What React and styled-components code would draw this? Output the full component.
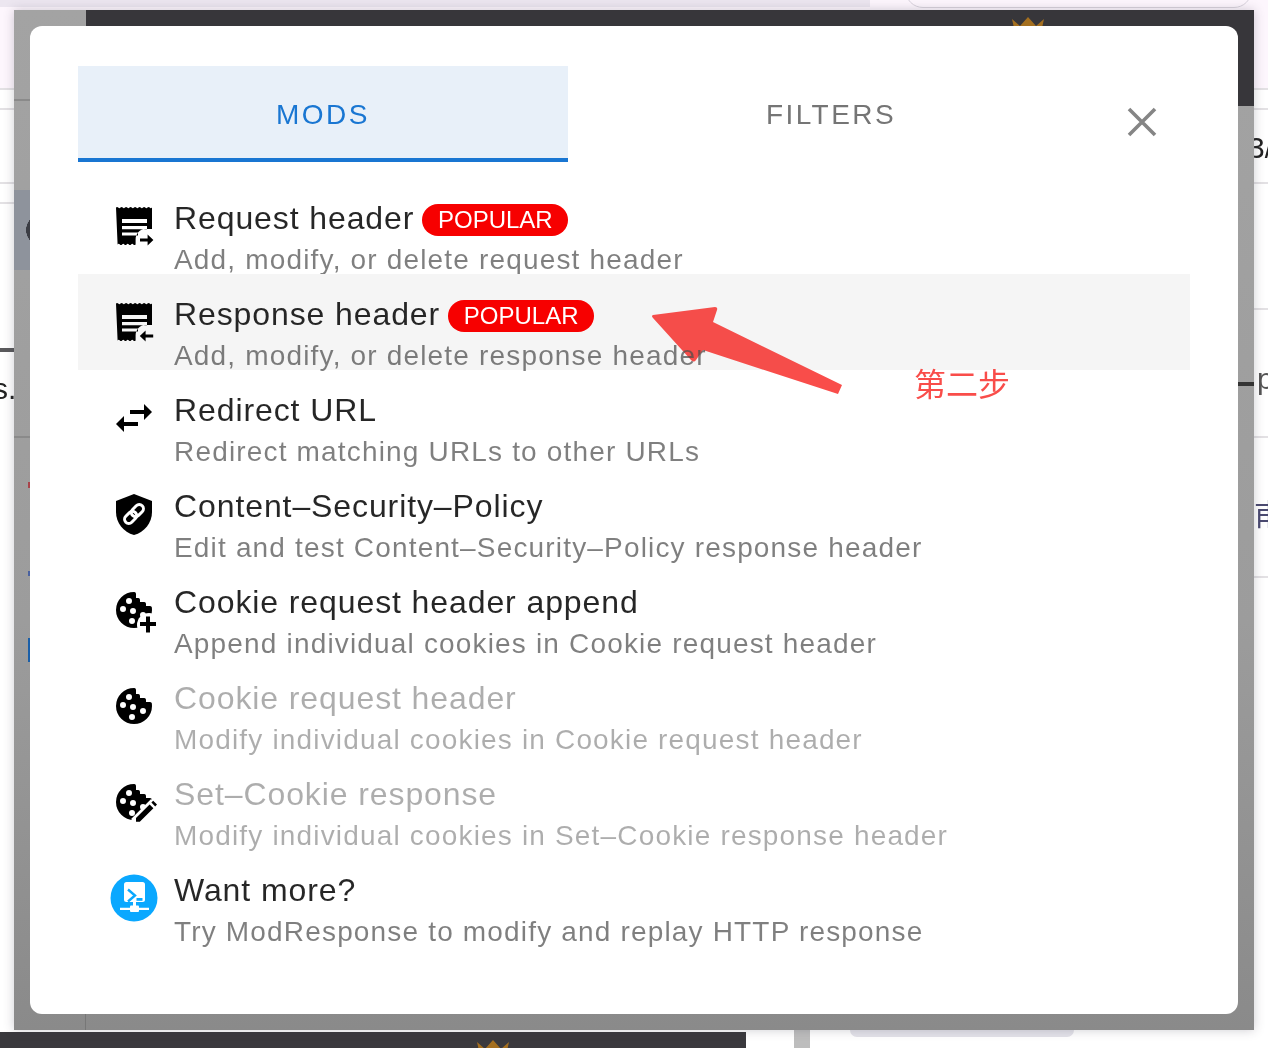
import styled, { createGlobalStyle } from "styled-components";

const GlobalStyle = createGlobalStyle`
  html, body {
    margin: 0;
    padding: 0;
    background: #fff;
    font-family: "Liberation Sans", Arial, sans-serif;
  }
`;

// one flat bar as a background layer, for the page that shows behind the overlay
const bar = (x, y, w, h, c) =>
  `linear-gradient(${c}, ${c}) ${x}px ${y}px / ${w}px ${h}px no-repeat`;

const Stage = styled.div`
  position: relative;
  display: flex;
  flex-direction: column;
  width: 1268px;
  height: 1048px;
  overflow: hidden;
  background: ${bar(0, 88, 1268, 2, "#e3e1e4")}, ${bar(0, 108, 1268, 2, "#e3e1e4")},
    ${bar(0, 182, 1268, 2, "#e3e1e4")}, ${bar(0, 202, 14, 2, "#e3e1e4")},
    ${bar(0, 348, 14, 4, "#5a5a5c")}, ${bar(1254, 308, 14, 2, "#e3e1e4")},
    ${bar(1254, 436, 14, 2, "#e3e1e4")}, ${bar(1254, 576, 14, 2, "#e3e1e4")},
    linear-gradient(#fdf6fd 0, #fdf6fd 88px, #fff 88px);
`;

const TopBand = styled.div`
  position: relative;
  flex: none;
  box-sizing: border-box;
  height: 10px;
  overflow: hidden;
  background: linear-gradient(#ece6f0 7px, transparent 7px) 0 0 / 870px 100% no-repeat;
  border-bottom: 2px solid #fdf6fd;
`;

const SearchPill = styled.div`
  position: absolute;
  top: -30px;
  left: 905px;
  width: 345px;
  height: 36px;
  border-radius: 18px;
  background: #fdf6fd;
  border: 1px solid #d8d2dc;
`;

const Scrap = styled.span`
  position: absolute;
  left: ${(p) => p.$x}px;
  top: ${(p) => p.$y}px;
  font-size: 30px;
  line-height: 34px;
  color: ${(p) => p.$c || "#222"};
  font-family: "Liberation Sans", "Noto Sans CJK SC", sans-serif;
`;

const TopCrown = styled.svg`
  position: absolute;
  left: 998px;
  top: 7px;
`;

const Overlay = styled.div`
  position: relative;
  flex: none;
  box-sizing: border-box;
  width: 1240px;
  height: 1020px;
  margin: 0 14px;
  padding: 16px;
  overflow: hidden;
  background: ${bar(72, 0, 1168, 96, "#37363a")}, ${bar(0, 89, 72, 2, "#8a8a8a")},
    radial-gradient(circle 16px at 28px 220px, #3b3d44 98%, transparent),
    ${bar(0, 180, 16, 80, "#8e939c")}, ${bar(0, 426, 16, 2, "#8a8a8a")},
    ${bar(1224, 372, 16, 4, "#333")}, ${bar(14, 472, 2, 6, "#a8434a")},
    ${bar(14, 561, 2, 5, "#4a62a0")}, ${bar(14, 628, 2, 24, "#1a5fa8")},
    ${bar(71, 1004, 1, 16, "#777")}, linear-gradient(#a3a3a3, #9c9c9c 60%, #8a8a8a);
  box-shadow: 0 0 10px rgba(60, 50, 70, 0.25);
`;

const Dialog = styled.div`
  position: relative;
  box-sizing: border-box;
  height: 988px;
  padding: 40px 48px;
  background: #fff;
  border-radius: 12px;
`;

const TabRow = styled.div`
  display: flex;
  align-items: stretch;
  height: 96px;
  margin-bottom: 16px;
`;

const Tab = styled.div`
  display: flex;
  align-items: center;
  justify-content: center;
  box-sizing: border-box;
  width: ${(p) => (p.$active ? 490 : 526)}px;
  padding-top: 6px;
  font-size: 28px;
  letter-spacing: 2.45px;
  color: ${(p) => (p.$active ? "#1976d2" : "#757575")};
  background: ${(p) => (p.$active ? "#e8f0f9" : "transparent")};
  border-bottom: 4px solid ${(p) => (p.$active ? "#1976d2" : "transparent")};
`;

const CloseButton = styled.button`
  display: flex;
  align-items: center;
  justify-content: center;
  width: 44px;
  height: 44px;
  margin: 34px 0 0 26px;
  padding: 0;
  border: none;
  background: transparent;
  color: #858585;
`;

const List = styled.div`
  display: flex;
  flex-direction: column;
`;

const Row = styled.div`
  display: flex;
  align-items: center;
  height: 96px;
  padding-left: 32px;
  background: ${(p) => (p.$hover ? "#f5f5f5" : "transparent")};
`;

const IconBox = styled.div`
  flex: none;
  width: 48px;
  height: 48px;
  margin-right: 16px;
`;

const Texts = styled.div`
  display: flex;
  flex-direction: column;
  padding-top: 24px;
`;

const Title = styled.div`
  display: flex;
  align-items: center;
  height: 42px;
  font-size: 32px;
  letter-spacing: 0.9px;
  color: ${(p) => (p.$off ? "rgba(0, 0, 0, 0.32)" : "rgba(0, 0, 0, 0.85)")};
`;

const Badge = styled.span`
  display: flex;
  align-items: center;
  justify-content: center;
  box-sizing: border-box;
  width: 146px;
  height: 32px;
  margin: 2px 0 0 8px;
  border-radius: 16px;
  background: #f70000;
  color: #fff;
  font-size: 24px;
  letter-spacing: 0;
`;

const Sub = styled.div`
  height: 39px;
  line-height: 39px;
  font-size: 28px;
  letter-spacing: 1.17px;
  white-space: nowrap;
  color: ${(p) => (p.$off ? "rgba(0, 0, 0, 0.32)" : "rgba(0, 0, 0, 0.5)")};
`;

const BottomStrip = styled.div`
  flex: 1;
  display: flex;
  align-items: flex-start;
`;

const BottomBar = styled.div`
  display: flex;
  align-items: flex-start;
  box-sizing: border-box;
  width: 746px;
  height: 16px;
  margin-top: 2px;
  padding: 8px 0 0 477px;
  overflow: hidden;
  background: #3a393d;
`;

const GreyStub = styled.div`
  width: 16px;
  height: 18px;
  margin-left: 48px;
  background: #bdbdbd;
`;

const Pill = styled.div`
  width: 224px;
  height: 7px;
  margin-left: 40px;
  border-radius: 0 0 8px 8px;
  background: #e4e3ea;
`;

const Arrow = styled.svg`
  position: absolute;
  left: 640px;
  top: 290px;
  mix-blend-mode: darken;
`;

const StepLabel = styled.span`
  position: absolute;
  left: 914px;
  top: 360px;
  font-family: "Noto Sans CJK SC", sans-serif;
  font-size: 32px;
  line-height: 44px;
  font-weight: 400;
  color: #f94d4a;
`;

const Glyph = ({ children }) => (
  <svg width="48" height="48" viewBox="0 0 24 24" fill="#000">
    {children}
  </svg>
);

const bump = "q.56-.7 1.12 0t1.13 0";
const bumpBack = "q-.56.7-1.12 0t-1.13 0";

const ReceiptBody = () => (
  <path
    fillRule="evenodd"
    d={`M3 2.8${bump}${bump}${bump}${bump}${bump}${bump}${bump}${bump}V13.5h-3.4c-2.6 0-4.8 2.4-4.8 5.2v2.5${bumpBack}${bumpBack}${bumpBack}${bumpBack}zM6 8.5v2h12.5v-2zM6 12v1.6h12.5V12zM6 15.2v1.6h8v-1.6z`}
  />
);

const ReceiptOut = () => (
  <Glyph>
    <ReceiptBody />
    <path d="M15 18.2h3.8v-1.9l2.9 2.7-2.9 2.7v-1.9H15z" />
  </Glyph>
);

const ReceiptIn = () => (
  <Glyph>
    <ReceiptBody />
    <path d="M21.6 18.2h-3.8v-1.9l-2.9 2.7 2.9 2.7v-1.9h3.8z" />
  </Glyph>
);

const Swap = () => (
  <Glyph>
    <path d="M21 9l-4-4v3h-7v2h7v3zM7 11l-4 4 4 4v-3h7v-2H7z" />
  </Glyph>
);

const ShieldLink = () => (
  <Glyph>
    <path d="M12 2L3 5.5V11c0 5.3 3.7 10.2 9 11.5 5.3-1.3 9-6.2 9-11.5V5.5z" />
    <g fill="none" stroke="#fff" strokeWidth="1.5" transform="rotate(-45 12 12)">
      <rect x="6.2" y="9.9" width="6.8" height="4.2" rx="2.1" />
      <rect x="11" y="9.9" width="6.8" height="4.2" rx="2.1" />
    </g>
  </Glyph>
);

const cookie =
  "M12,3A9,9 0 0,0 3,12A9,9 0 0,0 12,21A9,9 0 0,0 21,12C21,11.5 20.96,11 20.87,10.5C20.6,10 20,10 20,10H18V9C18,8 17,8 17,8H15V7C15,6 14,6 14,6H13V4C13,3 12,3 12,3M9.5,6A1.5,1.5 0 0,1 11,7.5A1.5,1.5 0 0,1 9.5,9A1.5,1.5 0 0,1 8,7.5A1.5,1.5 0 0,1 9.5,6M6.5,10A1.5,1.5 0 0,1 8,11.5A1.5,1.5 0 0,1 6.5,13A1.5,1.5 0 0,1 5,11.5A1.5,1.5 0 0,1 6.5,10M11.5,11A1.5,1.5 0 0,1 13,12.5A1.5,1.5 0 0,1 11.5,14A1.5,1.5 0 0,1 10,12.5A1.5,1.5 0 0,1 11.5,11M16.5,13A1.5,1.5 0 0,1 18,14.5A1.5,1.5 0 0,1 16.5,16A1.5,1.5 0 0,1 15,14.5A1.5,1.5 0 0,1 16.5,13M11,16A1.5,1.5 0 0,1 12.5,17.5A1.5,1.5 0 0,1 11,19A1.5,1.5 0 0,1 9.5,17.5A1.5,1.5 0 0,1 11,16Z";

const Cookie = () => (
  <Glyph>
    <path d={cookie} />
  </Glyph>
);

const CookiePlus = () => (
  <Glyph>
    <path d={cookie} />
    <circle cx="19.5" cy="19.5" r="6" fill="#fff" />
    <path d="M18 15.2h2V18h3v2h-3v3.2h-2V20h-3v-2h3z" />
  </Glyph>
);

const CookieEdit = () => (
  <Glyph>
    <path d={cookie} />
    <path d="M12.5 22.5L22.5 12.5" stroke="#fff" strokeWidth="5.5" />
    <path d="M13 20l6.8-6.8 1.9 1.9-6.8 6.8H13zM20.7 12.3l.9-.9 1.9 1.9-.9.9z" />
  </Glyph>
);

const ModResponseIcon = () => (
  <svg width="48" height="48" viewBox="0 0 48 48">
    <circle cx="24" cy="24" r="23.5" fill="#0aa8ff" />
    <rect x="14" y="8" width="21" height="20" rx="2.5" fill="#fff" />
    <path d="M18 15.5l7 6-7 6" fill="none" stroke="#0aa8ff" strokeWidth="2.4" />
    <path d="M26.5 24h6v2.8h-6z" fill="#0aa8ff" />
    <path d="M23 28h3v4h-3zM10 33.8h29v2.2H10z" fill="#fff" />
    <rect x="20" y="31.4" width="9" height="6.6" rx="1" fill="#fff" />
  </svg>
);

const CloseIcon = () => (
  <svg width="30" height="30" viewBox="0 0 30 30">
    <path d="M2 2l26 26M28 2L2 28" stroke="currentColor" strokeWidth="3.6" />
  </svg>
);

const mods = [
  { id: "req", icon: ReceiptOut, title: "Request header", sub: "Add, modify, or delete request header", popular: true },
  { id: "res", icon: ReceiptIn, title: "Response header", sub: "Add, modify, or delete response header", popular: true, hover: true },
  { id: "red", icon: Swap, title: "Redirect URL", sub: "Redirect matching URLs to other URLs" },
  { id: "csp", icon: ShieldLink, title: "Content–Security–Policy", sub: "Edit and test Content–Security–Policy response header" },
  { id: "cka", icon: CookiePlus, title: "Cookie request header append", sub: "Append individual cookies in Cookie request header" },
  { id: "ckr", icon: Cookie, title: "Cookie request header", sub: "Modify individual cookies in Cookie request header", off: true },
  { id: "sck", icon: CookieEdit, title: "Set–Cookie response", sub: "Modify individual cookies in Set–Cookie response header", off: true },
  { id: "more", icon: ModResponseIcon, title: "Want more?", sub: "Try ModResponse to modify and replay HTTP response" },
];

const crownPath = "M0 2l8 7 8-9 8 9 8-7-4 18H4z";

const App = () => (
  <Stage>
    <GlobalStyle />
    <TopBand>
      <SearchPill />
    </TopBand>

    <Scrap $x={-7} $y={372}>s.</Scrap>
    <Scrap $x={1248} $y={131}>3/</Scrap>
    <Scrap $x={1257} $y={362} $c="#555">p</Scrap>
    <Scrap $x={1254} $y={498} $c="#4a4a70">甫</Scrap>

    <Overlay>
      <TopCrown width="32" height="20" viewBox="0 0 32 20">
        <path d={crownPath} fill="#a46f1f" />
      </TopCrown>
      <Dialog>
        <TabRow>
          <Tab $active>MODS</Tab>
          <Tab>FILTERS</Tab>
          <CloseButton aria-label="Close">
            <CloseIcon />
          </CloseButton>
        </TabRow>
        <List>
          {mods.map((m) => {
            const Icon = m.icon;
            return (
              <Row key={m.id} $hover={m.hover}>
                <IconBox>
                  <Icon />
                </IconBox>
                <Texts>
                  <Title $off={m.off}>
                    {m.title}
                    {m.popular && <Badge>POPULAR</Badge>}
                  </Title>
                  <Sub $off={m.off}>{m.sub}</Sub>
                </Texts>
              </Row>
            );
          })}
        </List>
      </Dialog>
    </Overlay>

    <BottomStrip>
      <BottomBar>
        <svg width="32" height="20" viewBox="0 0 32 20">
          <path d={crownPath} fill="#a46f1f" />
        </svg>
      </BottomBar>
      <GreyStub />
      <Pill />
    </BottomStrip>

    <Arrow width="220" height="120" viewBox="0 0 220 120">
      <path
        d="M13 25L75 17Q78 17 77 20L73 32L202 95L198 104L63 60L56 70Q54 73 51 70L13 28Q11 26 13 25Z"
        fill="#f94d4a"
      />
    </Arrow>
    <StepLabel>第二步</StepLabel>
  </Stage>
);

export default App;
